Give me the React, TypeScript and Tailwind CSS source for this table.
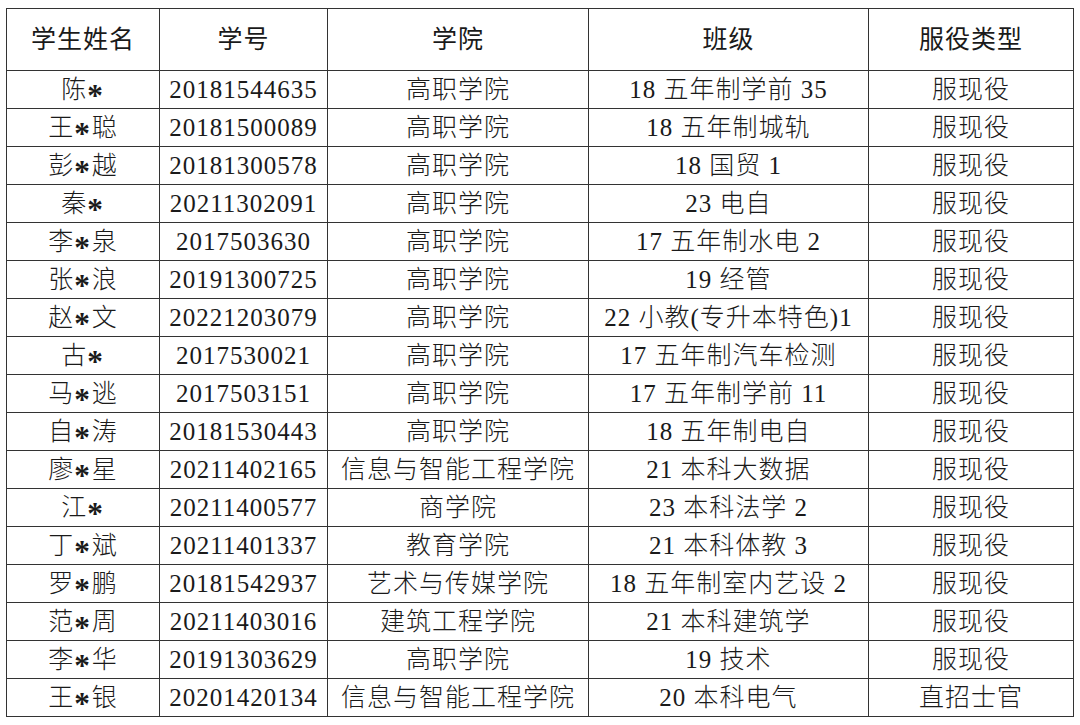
const rows: [string, string, string, string, string][] = [
  ["陈*", "20181544635", "高职学院", "18 五年制学前 35", "服现役"],
  ["王*聪", "20181500089", "高职学院", "18 五年制城轨", "服现役"],
  ["彭*越", "20181300578", "高职学院", "18 国贸 1", "服现役"],
  ["秦*", "20211302091", "高职学院", "23 电自", "服现役"],
  ["李*泉", "2017503630", "高职学院", "17 五年制水电 2", "服现役"],
  ["张*浪", "20191300725", "高职学院", "19 经管", "服现役"],
  ["赵*文", "20221203079", "高职学院", "22 小教(专升本特色)1", "服现役"],
  ["古*", "2017530021", "高职学院", "17 五年制汽车检测", "服现役"],
  ["马*逃", "2017503151", "高职学院", "17 五年制学前 11", "服现役"],
  ["自*涛", "20181530443", "高职学院", "18 五年制电自", "服现役"],
  ["廖*星", "20211402165", "信息与智能工程学院", "21 本科大数据", "服现役"],
  ["江*", "20211400577", "商学院", "23 本科法学 2", "服现役"],
  ["丁*斌", "20211401337", "教育学院", "21 本科体教 3", "服现役"],
  ["罗*鹏", "20181542937", "艺术与传媒学院", "18 五年制室内艺设 2", "服现役"],
  ["范*周", "20211403016", "建筑工程学院", "21 本科建筑学", "服现役"],
  ["李*华", "20191303629", "高职学院", "19 技术", "服现役"],
  ["王*银", "20201420134", "信息与智能工程学院", "20 本科电气", "直招士官"],
];

const headers = ["学生姓名", "学号", "学院", "班级", "服役类型"];

// 姓名里的 * 要居中偏下，和宋体里的星号一样；只用 transform，不撑高行
function Cell({ text }: { text: string }) {
  const parts = text.split("*");
  return (
    <>
      {parts.map((part, i) => (
        <span key={i}>
          {part}
          {i < parts.length - 1 && (
            <span className="inline-block translate-y-[6px] scale-125 px-[2px] font-bold">*</span>
          )}
        </span>
      ))}
    </>
  );
}

export default function App() {
  return (
    <div className="h-[725px] w-[1080px] bg-white pl-[6px] pt-[8px] font-['Liberation_Serif','Noto_Sans_CJK_SC',serif] text-[25px] font-light text-[#1a1a1a]">
      <table className="table-fixed border-collapse">
        <colgroup>
          <col className="w-[153px]" />
          <col className="w-[168px]" />
          <col className="w-[261px]" />
          <col className="w-[280px]" />
          <col className="w-[205px]" />
        </colgroup>
        <thead>
          <tr className="h-[62px]">
            {headers.map((h) => (
              <th key={h} className="border border-[#333] p-0 text-center font-normal tracking-[1px]">
                {h}
              </th>
            ))}
          </tr>
        </thead>
        <tbody>
          {rows.map((row) => (
            <tr key={row[1]} className="h-[38px]">
              {row.map((cell, i) => (
                <td key={i} className="whitespace-nowrap border border-[#333] p-0 text-center leading-none tracking-[1px]">
                  <Cell text={cell} />
                </td>
              ))}
            </tr>
          ))}
        </tbody>
      </table>
    </div>
  );
}
